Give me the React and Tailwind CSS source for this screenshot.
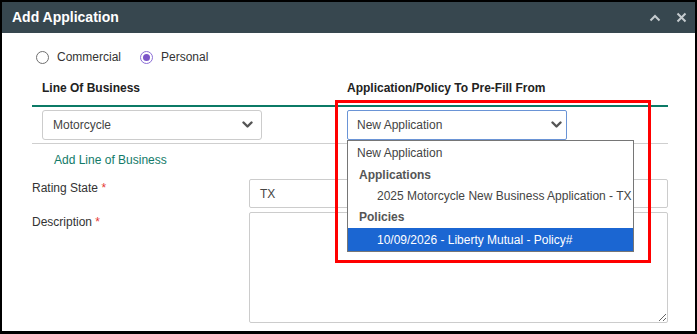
import React from 'react'

const Chevron = ({ className }) => (
  <svg className={className} width="11" height="8" viewBox="0 0 11 8" fill="none">
    <path d="M1.5 1.5l4 4 4-4" stroke="#555" strokeWidth="2.4" strokeLinecap="round" strokeLinejoin="round" />
  </svg>
)

const Radio = ({ checked, label }) => (
  <label className="flex items-center gap-[8px]">
    {checked ? (
      <span className="w-[13px] h-[13px] rounded-full border border-[#8c6fd6] bg-white flex items-center justify-center">
        <span className="w-[7px] h-[7px] rounded-full bg-[#7c55c8]"></span>
      </span>
    ) : (
      <span className="w-[13px] h-[13px] rounded-full border border-[#6f6f6f] bg-white"></span>
    )}
    <span className="text-[12px] text-[#333]">{label}</span>
  </label>
)

const App = () => {
  return (
    <div className="relative w-[697px] h-[334px] bg-white border-l-2 border-t-2 border-r-2 border-b-[3px] border-black font-['Liberation_Sans',Arial,sans-serif] overflow-hidden">
      <div className="h-[31px] bg-[#37474f] flex items-center justify-between pl-[10px] pr-[8px]">
        <span className="text-white font-bold text-[14px]">Add Application</span>
        <div className="flex items-center gap-[15px]">
          <svg width="12" height="8" viewBox="0 0 12 8" fill="none">
            <path d="M1.5 6.5l4.5-4.5 4.5 4.5" stroke="#c5cbcf" strokeWidth="2" />
          </svg>
          <svg width="11" height="11" viewBox="0 0 11 11" fill="none">
            <path d="M1.5 1.5l8 8M9.5 1.5l-8 8" stroke="#c5cbcf" strokeWidth="2" />
          </svg>
        </div>
      </div>

      <div className="pl-[30px] pr-[27px] pt-[14px] pb-[8px] text-[12px] leading-[14px] text-[#333]">
        <div className="h-[20px] flex items-center gap-[19px] pl-[4px]">
          <Radio label="Commercial" />
          <Radio checked label="Personal" />
        </div>

        <div className="h-[38px] pt-[4px] grid grid-cols-[305px_1fr] items-center font-bold text-[#222]">
          <div className="pl-[10px]">Line Of Business</div>
          <div className="pl-[10px]">Application/Policy To Pre-Fill From</div>
        </div>
        <div className="h-[2px] bg-[#0b7a66]"></div>

        <div className="h-[37px] pt-[3px] border-b border-[#cfcfcf] grid grid-cols-[305px_1fr]">
          <div className="pl-[10px]">
            <div className="w-[220px] h-[30px] border border-[#cccccc] rounded-[3px] flex items-center justify-between pl-[10px] pr-[8px] text-[#444]">
              <span>Motorcycle</span>
              <Chevron />
            </div>
          </div>
          <div className="pl-[10px]">
            <div className="relative w-[220px]">
              <div className="h-[30px] border border-[#6a94d6] rounded-[2px] flex items-center justify-between pl-[9px] pr-[4px] text-[#444]">
                <span>New Application</span>
                <Chevron />
              </div>
              <div className="absolute left-0 top-[30px] w-[287px] h-[112px] border border-[#767676] bg-white z-10 text-[#444]">
                <div className="h-[23px] flex items-center pl-[9px]">New Application</div>
                <div className="h-[22px] flex items-center pl-[11px] font-bold text-[#555]">Applications</div>
                <div className="h-[20px] flex items-center pl-[29px]">2025 Motorcycle New Business Application - TX</div>
                <div className="h-[22px] flex items-center pl-[11px] font-bold text-[#555]">Policies</div>
                <div className="h-[23px] flex items-center pl-[29px] bg-[#1b66d2] text-white">10/09/2026 - Liberty Mutual - Policy#</div>
              </div>
            </div>
          </div>
        </div>

        <div className="h-[35px] pt-[9px] pl-[22px] text-[#127a68]">Add Line of Business</div>

        <div className="h-[29px] flex">
          <div className="w-[217px] pt-[2px]">
            Rating State <span className="text-[#e53935]">*</span>
          </div>
          <div className="flex-1 border border-[#cccccc] rounded-[2px] flex items-center pl-[10px] text-[#444]">TX</div>
        </div>

        <div className="mt-[4px] h-[111px] flex">
          <div className="w-[217px] pt-[3px]">
            Description <span className="text-[#e53935]">*</span>
          </div>
          <textarea className="flex-1 h-[111px] border border-[#cccccc] rounded-[2px] outline-none resize-y"></textarea>
        </div>
      </div>

      <div className="absolute left-[333px] top-[98px] w-[316px] h-[163px] border-[3px] border-[#ff0000] z-20 pointer-events-none"></div>
    </div>
  )
}

export default App
